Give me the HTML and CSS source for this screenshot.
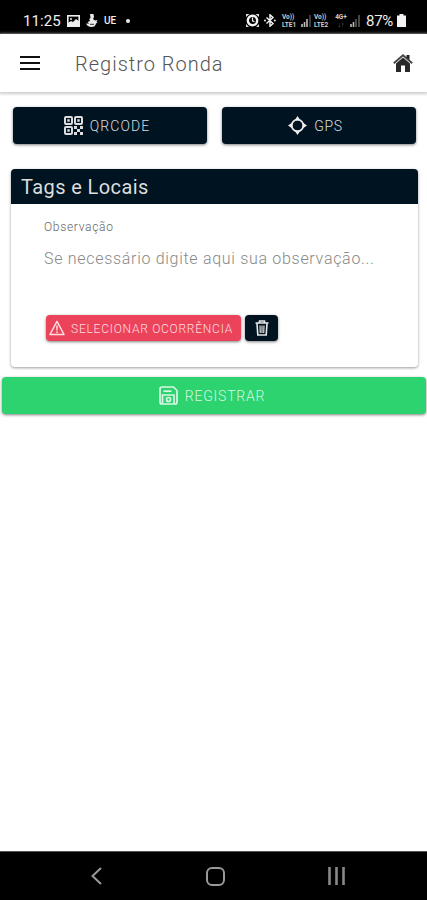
FILE: index.html
```html
<!DOCTYPE html>
<html lang="pt-BR">
<head>
    <meta charset="UTF-8">
    <meta name="viewport" content="width=device-width, initial-scale=1.0">
    <title>Registro Ronda</title>
    <link rel="stylesheet" href="styles.css">
</head>
<body>
    <div class="status-bar">
        <span class="time">11:25</span>
        <svg class="st-image" width="13" height="12" viewBox="0 0 13 12"><rect x=".8" y=".8" width="11.4" height="10.4" fill="none" stroke="#eee" stroke-width="1.6"/><path d="M1 10V8l3-2 2 1 3-3 3 2v5H1z" fill="#eee"/><circle cx="4" cy="4" r="1" fill="#eee"/></svg>
        <svg class="st-app" width="12" height="13" viewBox="0 0 12 13"><path d="M4 0h3.500l.5 3-1 2 2 1.500L11.500 6 10.500 8l1 .5-1.500 1C9.500 12 8 13 5.500 13 2.500 13 1 11.500 0 9.500l3 .3L1.500 8 4 7l-.8-2 1.300-1z" fill="#e8e8e8"/><path d="M4 10.300h4" stroke="#000" stroke-width=".8"/></svg>
        <span class="carrier">UE</span>
        <span class="dot"></span>
        <div class="status-right">
            <svg class="st-alarm" width="13" height="13" viewBox="0 0 13 13"><path d="M0 3V0h3.500zM13 3V0H9.500zM0 10v3h3zM13 10v3h-3z" fill="#ddd"/><circle cx="6.500" cy="6.500" r="4.700" fill="none" stroke="#f2f2f2" stroke-width="2.400"/><path d="M6.500 3.500v3.300l2 1" fill="none" stroke="#f2f2f2" stroke-width="1.200"/></svg>
            <svg class="st-bt" width="12" height="13" viewBox="0 0 12 13"><path d="M2.500 3.500l6.500 6-3 2.700V.8L9 3.500l-6.500 6" fill="none" stroke="#eee" stroke-width="1.500"/><circle cx="1" cy="6.500" r="1" fill="#eee"/><circle cx="10.800" cy="6.500" r="1" fill="#eee"/></svg>
            <span class="lte"><span>Vo))</span><span>LTE1</span></span>
            <svg class="st-signal" width="10" height="12" viewBox="0 0 10 12"><path d="M1 12V9M3.500 12V7M6 12V4" stroke="#bbb" stroke-width="1.600"/><path d="M9 12V0" stroke="#555" stroke-width="1.400"/></svg>
            <span class="lte lte-two"><span>Vo))</span><span>LTE2</span></span>
            <span class="lte data"><span>4G+</span><span class="arrows">↓↑</span></span>
            <svg class="st-signal-two" width="10" height="12" viewBox="0 0 10 12"><path d="M1 12V9M3.500 12V7" stroke="#bbb" stroke-width="1.600"/><path d="M6 12V4M9 12V0" stroke="#666" stroke-width="1.400"/></svg>
            <span class="percent">87%</span>
            <svg class="st-battery" width="9" height="13" viewBox="0 0 9 13"><path d="M2.500 0h4v1.500H9V13H0V1.500h2.500z" fill="#f4f4f4"/></svg>
        </div>
    </div>

    <header>
        <svg class="menu" width="20" height="14" viewBox="0 0 20 14"><path d="M0 1h20M0 7h20M0 13h20" stroke="#111" stroke-width="2"/></svg>
        <h1>Registro Ronda</h1>
        <svg class="home" width="20" height="18" viewBox="0 0 20 18"><path d="M3 9.500l7-6 7 6V18h-5v-6.500H8V18H3z" fill="#292929"/><path d="M.8 9.200L10 1.300l9.200 7.900" fill="none" stroke="#444" stroke-width="1.800"/><path d="M13.500 1h3v5l-3-2.500z" fill="#222"/></svg>
    </header>

    <main>
        <div class="actions">
            <button class="btn dark qr">
                <svg width="19" height="19" viewBox="0 0 19 19"><g fill="none" stroke="#ddd" stroke-width="2"><rect x="1" y="1" width="7" height="7" rx="1"/><rect x="11" y="1" width="7" height="7" rx="1"/><rect x="1" y="11" width="7" height="7" rx="1"/></g><path d="M3.300 3.300h2.400v2.400H3.300zM13.300 3.300h2.400v2.400h-2.400zM3.300 13.300h2.400v2.400H3.300zM10 10h3v3h-3zM13 13h3v3h-3zM16 10h3v3h-3zM10 16h3v3h-3zM16 16h3v3h-3z" fill="#ddd"/></svg>
                <span class="qr-text">QRCODE</span>
            </button>
            <button class="btn dark gps">
                <svg width="19" height="19" viewBox="0 0 19 19"><circle cx="9.500" cy="9.500" r="5.800" fill="none" stroke="#eee" stroke-width="1.700"/><path d="M9.500 0L12.500 4.400h-6zM9.500 19l-3-4.400h6zM0 9.500l4.400-3v6zM19 9.500l-4.400 3v-6z" fill="#eee"/></svg>
                <span class="gps-text">GPS</span>
            </button>
        </div>

        <section class="card">
            <h2>Tags e Locais</h2>
            <div class="card-body">
                <div class="label">Observação</div>
                <div class="placeholder">Se necessário digite aqui sua observação...</div>
                <div class="row">
                    <button class="btn red">
                        <svg width="16" height="16" viewBox="0 0 16 16"><path d="M8 1.300L15 14.500H1z" fill="none" stroke="#ffdfe4" stroke-width="1.500" stroke-linejoin="round"/><path d="M8 5.500v5M8 11.500v1.500" stroke="#ffdfe4" stroke-width="1.500"/></svg>
                        <span class="red-text">SELECIONAR OCORRÊNCIA</span>
                    </button>
                    <button class="btn dark trash">
                        <svg width="14" height="16" viewBox="0 0 14 16"><path d="M.5 3h13M4.500 3V1h5v2M2 3.500L2.800 15h8.400L12 3.500" fill="none" stroke="#e8e8e8" stroke-width="1.600"/><path d="M5 5.500l.3 7.500M7 5.500V13M9 5.500L8.700 13" stroke="#ddd" stroke-width="1.200"/></svg>
                    </button>
                </div>
            </div>
        </section>

        <button class="btn green">
            <svg width="19" height="19" viewBox="0 0 19 19"><g fill="none" stroke="#d9f8e5" stroke-width="1.700"><path d="M3 1h11.500L18 4.500V16q0 2-2 2H3q-2 0-2-2V3q0-2 2-2z"/><path d="M4.500 5.200h8"/><path d="M3.500 17.500V9h11.500v8.500"/><circle cx="9.500" cy="13.500" r="2"/></g></svg>
            <span class="green-text">REGISTRAR</span>
        </button>
    </main>

    <nav>
        <svg class="back" width="11" height="18" viewBox="0 0 11 18"><path d="M10 1L1.500 9l8.500 8" fill="none" stroke="#999" stroke-width="2"/></svg>
        <svg class="circle" width="19" height="19" viewBox="0 0 19 19"><rect x="1" y="1" width="17" height="17" rx="5" fill="none" stroke="#999" stroke-width="2"/></svg>
        <svg class="recent" width="17" height="18" viewBox="0 0 17 18"><path d="M1.500 0v18M8.500 0v18M15.500 0v18" stroke="#888" stroke-width="2.600"/></svg>
    </nav>
</body>
</html>
```

FILE: styles.css
```css
* {
    box-sizing: border-box;
}
body {
    margin: 0;
    height: 900px;
    display: flex;
    flex-direction: column;
    font-family: Roboto, "Liberation Sans", sans-serif;
    background-color: #fff;
    overflow: hidden;
}
svg {
    display: block;
    flex: none;
}
h1, h2 {
    margin: 0;
    white-space: nowrap;
}
.status-bar {
    display: flex;
    align-items: center;
    height: 34px;
    padding: 7px 21px 0 23px;
    background-color: #000;
    color: #eee;
    flex: none;
}
.time {
    width: 44px;
    font-size: 15px;
    letter-spacing: 0.1px;
}
.st-app {
    margin-left: 6px;
}
.carrier {
    width: 14px;
    margin-left: 6px;
    font-size: 10px;
    font-weight: 500;
}
.dot {
    width: 4px;
    height: 4px;
    margin-left: 8px;
    border-radius: 50%;
    background-color: #eee;
}
.status-right {
    display: flex;
    align-items: center;
    margin-left: auto;
}
.st-bt {
    margin-left: 5px;
}
.lte {
    display: flex;
    flex-direction: column;
    width: 17px;
    margin-left: 6px;
    font-size: 6.5px;
    font-weight: 700;
    line-height: 8px;
    white-space: nowrap;
    color: #ccc;
}
.st-signal {
    margin-left: 2px;
}
.lte-two {
    margin-left: 3px;
}
.data {
    width: 14px;
    margin-left: 3px;
    align-items: center;
}
.arrows {
    color: #777;
}
.st-signal-two {
    margin-left: 2px;
}
.percent {
    width: 31px;
    margin-left: 6px;
    font-size: 15px;
    letter-spacing: -0.3px;
}
header {
    display: flex;
    align-items: center;
    height: 58px;
    padding: 0 14px 0 20px;
    box-shadow: 0 1px 3px 1px #ccc;
    flex: none;
}
h1 {
    margin-left: 35px;
    padding-top: 2px;
    font-size: 20px;
    font-weight: 300;
    letter-spacing: 1px;
    color: #555;
}
.home {
    margin-left: auto;
}
main {
    flex: 1;
    padding-top: 15px;
}
.btn {
    display: flex;
    align-items: center;
    justify-content: center;
    padding: 0;
    border: none;
    border-radius: 4px;
    font-family: inherit;
    font-weight: 300;
    white-space: nowrap;
    box-shadow: 0 1px 3px rgba(0, 0, 0, 0.5);
}
.dark {
    background-color: #001321;
    color: #ddd;
}
.actions {
    display: grid;
    grid-template-columns: 1fr 1fr;
    gap: 15px;
    padding: 0 11px 0 13px;
}
.actions .btn {
    height: 37px;
    gap: 7px;
    font-size: 14px;
}
.actions .qr {
    padding-right: 6px;
}
.actions .gps {
    padding-right: 7px;
}
.qr-text {
    letter-spacing: 1.1px;
}
.gps-text {
    letter-spacing: 0.6px;
}
.card {
    height: 198px;
    margin: 25px 9px 0 11px;
    border-radius: 4px;
    box-shadow: 0 1px 3px rgba(0, 0, 0, 0.4);
}
h2 {
    height: 35px;
    padding-left: 10px;
    border-radius: 4px 4px 0 0;
    background-color: #001321;
    color: #ddd;
    font-size: 20px;
    font-weight: 400;
    line-height: 36px;
    letter-spacing: 0.4px;
}
.card-body {
    padding: 15px 0 0 33px;
}
.label {
    font-size: 12px;
    line-height: 16px;
    font-weight: 300;
    letter-spacing: 0.7px;
    color: #666;
}
.placeholder {
    margin-top: 14px;
    font-size: 16px;
    line-height: 20px;
    font-weight: 300;
    letter-spacing: 0.7px;
    white-space: nowrap;
    color: #888;
}
.row {
    display: flex;
    gap: 4px;
    margin: 46px 0 0 2px;
}
.row .btn {
    height: 26px;
}
.red {
    width: 195px;
    gap: 6px;
    padding-right: 5px;
    background-color: #eb445a;
    color: #ffdce1;
}
.red-text {
    padding-top: 1px;
    font-size: 12px;
    letter-spacing: 0.75px;
}
.trash {
    width: 33px;
}
.green {
    width: 424px;
    height: 37px;
    margin: 10px 0 0 2px;
    padding-right: 4px;
    gap: 7px;
    background-color: #2dd36f;
    color: #d4f7e1;
}
.green-text {
    font-size: 14px;
    letter-spacing: 0.8px;
}
nav {
    display: flex;
    align-items: center;
    height: 49px;
    padding: 0 82px 0 91px;
    border-top: 1px solid #555;
    background-color: #000;
    justify-content: space-between;
    flex: none;
}
```
